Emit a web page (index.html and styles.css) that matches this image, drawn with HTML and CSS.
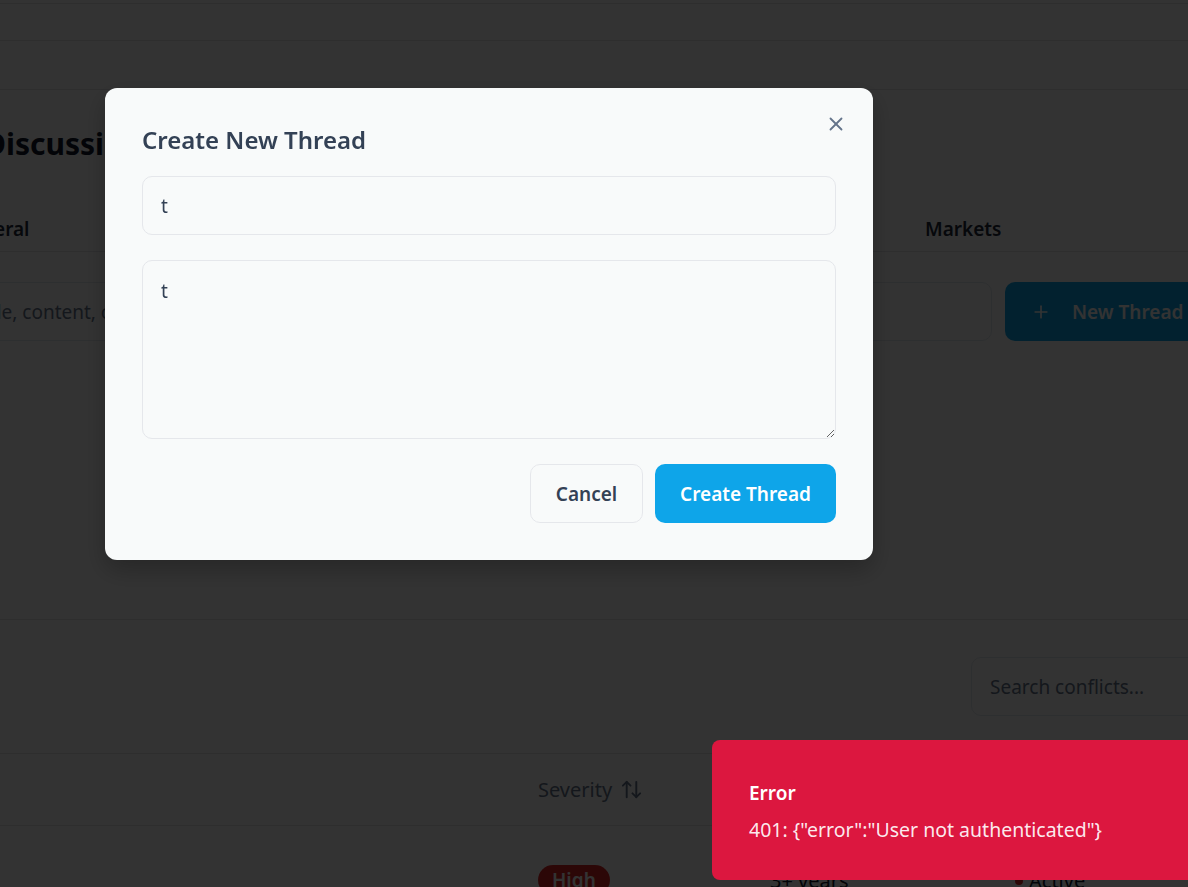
FILE: index.html
```html
<!DOCTYPE html>
<html lang="en">
<head>
<meta charset="utf-8">
<title>Create New Thread</title>
<link rel="stylesheet" href="styles.css">
</head>
<body>
<div class="page">
  <div class="topstrip"></div>
  <div class="navbar"></div>
  <div class="subnav"></div>

  <section class="discussion">
    <h1 class="page-title">Discussion</h1>
    <nav class="tabs">
      <span class="tab">General</span>
      <span class="tab">Politics</span>
      <span class="tab">Economy</span>
      <span class="tab">Technology</span>
      <span class="tab">Markets</span>
    </nav>
    <div class="toolbar">
      <div class="search-box">Search by title, content, or author...</div>
      <button class="btn-new" type="button">
        <svg class="icon-plus" viewBox="0 0 24 24" width="20" height="20" fill="none" stroke="currentColor" stroke-width="2" stroke-linecap="round"><path d="M5 12h14"/><path d="M12 5v14"/></svg>
        <span>New Thread</span>
      </button>
    </div>
  </section>

  <section class="conflicts">
    <div class="conf-toolbar">
      <div class="conf-search">Search conflicts...</div>
    </div>
    <div class="table">
      <div class="trow thead">
        <span class="cell">Conflict</span>
        <span class="cell sev">Severity
          <svg viewBox="0 0 24 24" width="23" height="23" fill="none" stroke="currentColor" stroke-width="2" stroke-linecap="round" stroke-linejoin="round"><path d="m21 16-4 4-4-4"/><path d="M17 20V4"/><path d="m3 8 4-4 4 4"/><path d="M7 4v16"/></svg>
        </span>
        <span class="cell">Duration</span>
        <span class="cell">Status</span>
      </div>
      <div class="trow tbody">
        <span class="cell">Region</span>
        <span class="cell"><span class="badge">High</span></span>
        <span class="cell">3+ years</span>
        <span class="cell status"><span class="dot"></span>Active</span>
      </div>
    </div>
  </section>
</div>

<div class="overlay"></div>

<div class="modal" role="dialog">
  <h2 class="modal-title">Create New Thread</h2>
  <svg class="close" viewBox="0 0 24 24" width="22" height="22" fill="none" stroke="currentColor" stroke-width="2" stroke-linecap="round"><path d="M18 6 6 18"/><path d="m6 6 12 12"/></svg>
  <input class="field" type="text" value="t">
  <textarea class="field area">t</textarea>
  <div class="actions">
    <button class="btn btn-cancel" type="button">Cancel</button>
    <button class="btn btn-create" type="button">Create Thread</button>
  </div>
</div>

<div class="toast">
  <div class="toast-title">Error</div>
  <div class="toast-msg">401: {"error":"User not authenticated"}</div>
</div>
</body>
</html>
```

FILE: styles.css
```css
* { box-sizing: border-box; }

html, body {
  margin: 0;
  height: 100%;
}

body {
  font-family: "Noto Sans", "Open Sans", sans-serif;
  background: #ffffff;
  color: #0f172a;
  overflow: hidden;
}

.page {
  width: 1352px;
  margin-left: -140px;
}

.topstrip {
  height: 4px;
  border-bottom: 1px solid #e4e4e7;
}

.navbar {
  height: 37px;
  border-bottom: 1px solid #e4e4e7;
}

.subnav {
  height: 49px;
  border-bottom: 1px solid #e4e4e7;
}

.discussion {
  height: 530px;
  padding-top: 34px;
  border-bottom: 1px solid #e4e4e7;
}

.page-title {
  margin: 0 0 0 124px;
  font-size: 30px;
  line-height: 40px;
  font-weight: 700;
  color: #0f172a;
  white-space: nowrap;
}

.tabs {
  margin-top: 42px;
  height: 46px;
  display: grid;
  grid-template-columns: repeat(5, 242.5px);
  padding-left: 12px;
  border-bottom: 1px solid #e4e4e7;
  align-items: center;
}

.tab {
  text-align: center;
  font-size: 19px;
  font-weight: 600;
  color: #1e293b;
  white-space: nowrap;
}

.toolbar {
  margin-top: 30px;
  display: flex;
  gap: 13px;
}

.search-box {
  width: 1132px;
  flex: none;
  height: 59px;
  border: 1px solid #e2e8f0;
  border-radius: 10px;
  padding: 0 26px;
  display: flex;
  align-items: center;
  font-size: 19px;
  color: #64748b;
  white-space: nowrap;
}

.btn-new {
  width: 207px;
  flex: none;
  height: 59px;
  border: 0;
  border-radius: 10px;
  background: #0ea5e9;
  color: #ffffff;
  display: flex;
  align-items: center;
  gap: 21px;
  padding: 0 26px;
  font-family: inherit;
  font-size: 19px;
  font-weight: 600;
  white-space: nowrap;
}

.icon-plus { flex: none; }

.conflicts {
  padding-top: 37px;
}

.conf-toolbar {
  display: flex;
  justify-content: flex-end;
}

.conf-search {
  width: 241px;
  height: 59px;
  border: 1px solid #e2e8f0;
  border-radius: 10px;
  padding: 0 18px;
  display: flex;
  align-items: center;
  font-size: 19px;
  color: #64748b;
  white-space: nowrap;
}

.table {
  margin-top: 37px;
}

.trow {
  display: grid;
  grid-template-columns: 678px 232px 245px 1fr;
  align-items: center;
}

.thead {
  height: 73px;
  border-top: 1px solid #e4e4e7;
  border-bottom: 1px solid #e4e4e7;
  font-size: 20px;
  color: #64748b;
}

.thead .cell:first-child,
.tbody .cell:first-child {
  visibility: hidden;
}

.sev {
  display: flex;
  align-items: center;
  gap: 8px;
}

.tbody {
  height: 112px;
  padding-top: 39px;
  align-items: start;
  font-size: 20px;
  color: #0f172a;
}

.tbody .cell:nth-child(3),
.tbody .status {
  padding-top: 2px;
}

.badge {
  display: inline-block;
  padding: 2px 14px;
  border-radius: 999px;
  background: #dc2626;
  color: #ffffff;
  font-weight: 600;
  font-size: 19px;
}

.status {
  display: flex;
  align-items: center;
  gap: 6px;
}

.dot {
  width: 8px;
  height: 8px;
  border-radius: 50%;
  background: #dc2626;
}

.overlay {
  position: fixed;
  inset: 0;
  background: rgba(0, 0, 0, 0.8);
}

.modal {
  position: fixed;
  left: 105px;
  top: 88px;
  width: 768px;
  height: 472px;
  padding: 36px 37px 37px;
  border-radius: 12px;
  background: #f8fafa;
  box-shadow: 0 10px 25px rgba(0, 0, 0, 0.25);
  display: flex;
  flex-direction: column;
}

.modal-title {
  margin: 0;
  font-size: 24px;
  line-height: 31px;
  font-weight: 600;
  color: #334155;
}

.close {
  position: absolute;
  right: 26px;
  top: 25px;
  color: #64748b;
}

.field {
  display: block;
  width: 100%;
  margin-top: 21px;
  height: 59px;
  border: 1px solid #e5e7eb;
  border-radius: 10px;
  background: #f8fafa;
  padding: 0 18px;
  font-family: inherit;
  font-size: 19px;
  color: #334155;
  outline: none;
}

.area {
  margin-top: 25px;
  height: 179px;
  padding: 15px 18px;
  line-height: 30px;
  resize: vertical;
}

.actions {
  margin-top: 25px;
  display: flex;
  justify-content: flex-end;
  gap: 12px;
}

.btn {
  height: 59px;
  border-radius: 10px;
  font-family: inherit;
  font-size: 19px;
  font-weight: 600;
  padding: 0 20px;
  white-space: nowrap;
}

.btn-cancel {
  width: 113px;
  border: 1px solid #e5e7eb;
  background: #f8fafa;
  color: #334155;
}

.btn-create {
  width: 181px;
  border: 0;
  background: #0ea5e9;
  color: #ffffff;
}

.toast {
  position: fixed;
  left: 712px;
  top: 740px;
  width: 520px;
  height: 140px;
  padding: 40px 37px 0;
  border-radius: 8px;
  background: #dc173f;
  color: #ffffff;
}

.toast-title {
  font-size: 19px;
  font-weight: 600;
  line-height: 26px;
}

.toast-msg {
  margin-top: 11px;
  font-size: 19.5px;
  line-height: 26px;
  color: rgba(255, 255, 255, 0.92);
  white-space: nowrap;
}
```
